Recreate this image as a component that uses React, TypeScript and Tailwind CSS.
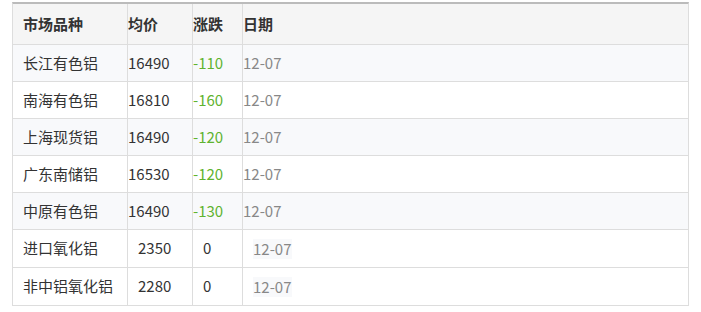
import React from 'react';

type Row = { name: string; price: string; change: string; date: string; shaded?: boolean; plain?: boolean };

const rows: Row[] = [
  { name: '长江有色铝', price: '16490', change: '-110', date: '12-07', shaded: true },
  { name: '南海有色铝', price: '16810', change: '-160', date: '12-07' },
  { name: '上海现货铝', price: '16490', change: '-120', date: '12-07', shaded: true },
  { name: '广东南储铝', price: '16530', change: '-120', date: '12-07' },
  { name: '中原有色铝', price: '16490', change: '-130', date: '12-07', shaded: true },
  { name: '进口氧化铝', price: '2350', change: '0', date: '12-07', plain: true },
  { name: '非中铝氧化铝', price: '2280', change: '0', date: '12-07', plain: true },
];

export default function App() {
  return (
    <div className="w-[701px] h-[312px] bg-white pt-[2px] pl-[12px] text-[15px] text-[#333] [font-family:'Noto_Sans_CJK_SC','Liberation_Sans',sans-serif]">
      <div className="w-[677px] border-t-2 border-t-[#bbbbbb] border-x border-x-[#dddddd]">
        {/* Header */}
        <div className="flex h-[41px] bg-[#f5f5f5] border-b border-[#dddddd] font-bold">
          <div className="w-[115px] pl-[10px] flex items-center border-r border-[#dddddd]">市场品种</div>
          <div className="w-[65px] flex items-center border-r border-[#dddddd]">均价</div>
          <div className="w-[50px] flex items-center border-r border-[#dddddd]">涨跌</div>
          <div className="flex-1 flex items-center">日期</div>
        </div>

        {rows.map((r) => (
          <div
            key={r.name}
            className={`flex border-b border-[#dddddd] ${r.plain ? 'h-[38px] bg-white' : 'h-[37px]'} ${r.shaded ? 'bg-[#f8f9fb]' : 'bg-white'}`}
          >
            <div className="w-[115px] pl-[10px] flex items-center border-r border-[#dddddd]">{r.name}</div>
            {r.plain ? (
              <>
                <div className="w-[65px] pl-[10px] flex items-center border-r border-[#dddddd]">{r.price}</div>
                <div className="w-[50px] pl-[10px] flex items-center border-r border-[#dddddd]">{r.change}</div>
                <div className="flex-1 pl-[10px] flex items-center">
                  <span className="bg-[#f8f9fb] text-[#888] leading-[20px]">{r.date}</span>
                </div>
              </>
            ) : (
              <>
                <div className="w-[65px] flex items-center border-r border-[#dddddd]">{r.price}</div>
                <div className="w-[50px] flex items-center border-r border-[#dddddd] text-[#5fb330]">{r.change}</div>
                <div className="flex-1 flex items-center text-[#888]">{r.date}</div>
              </>
            )}
          </div>
        ))}
      </div>
    </div>
  );
}
